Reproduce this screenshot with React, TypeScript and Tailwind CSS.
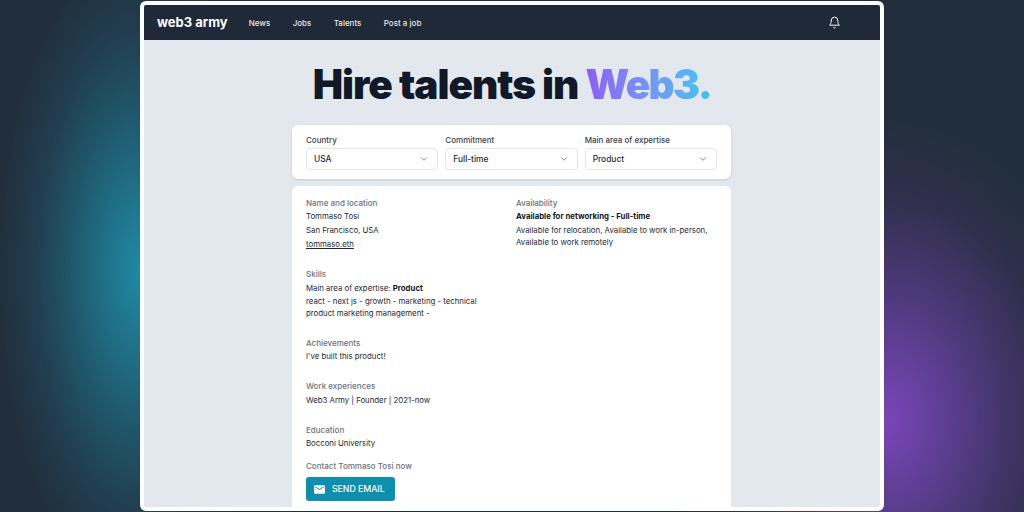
const navLinks = ['News', 'Jobs', 'Talents', 'Post a job'];

const filters = [
  { label: 'Country', value: 'USA' },
  { label: 'Commitment', value: 'Full-time' },
  { label: 'Main area of expertise', value: 'Product' },
];

const Heading = ({ children }: { children: string }) => (
  <p className="text-[8px] leading-[13px] font-medium text-[#6b7280]">{children}</p>
);

const App = () => {
  return (
    <div className="flex h-[512px] w-[1024px] justify-center overflow-hidden bg-[#212f3d] bg-[radial-gradient(ellipse_140px_320px_at_140px_270px,#1f8aa3_0%,#1f7188_25%,#20566a_50%,#213e50_75%,transparent_100%),radial-gradient(ellipse_220px_300px_at_886px_420px,#7a45b8_0%,#5f3f95_25%,#46376f_50%,#302f4c_75%,transparent_100%)] py-px font-['Inter',sans-serif]">
      <div className="flex h-[510px] w-[744px] flex-col overflow-hidden rounded-md border-[4px] border-white bg-[#e2e8ee]">
        <nav className="flex h-[35px] shrink-0 items-center bg-[#1f2937] pr-[39px] pl-[13px]">
          <span className="text-[13px] font-bold text-white">web3 army</span>
          <div className="ml-[21px] flex gap-[22.4px] text-[8px] font-medium text-[#e5e7eb]">
            {navLinks.map((link) => (
              <span key={link}>{link}</span>
            ))}
          </div>
          <svg className="ml-auto text-white" width="13" height="13" viewBox="0 0 24 24" fill="none" stroke="currentColor" strokeWidth="1.8" strokeLinecap="round" strokeLinejoin="round">
            <path d="M6 8a6 6 0 0 1 12 0c0 7 3 9 3 9H3s3-2 3-9" />
            <path d="M10.3 21a1.94 1.94 0 0 0 3.4 0" />
          </svg>
        </nav>

        <h1 className="mt-[22px] text-center text-[40.5px] leading-[46px] font-black tracking-[-0.025em] text-[#111827]">
          Hire talents in{' '}
          <span className="bg-gradient-to-r from-[#8b5cf6] to-[#38c5f0] bg-clip-text tracking-[-0.04em] text-transparent">Web3.</span>
        </h1>

        <section className="mt-[17px] ml-[148px] grid w-[439px] shrink-0 grid-cols-3 gap-[7px] rounded-md bg-white px-[14px] pt-2 pb-[9px] shadow-sm">
          {filters.map((filter) => (
            <div key={filter.label}>
              <label className="block text-[8px] leading-[14px] font-medium text-[#374151]">{filter.label}</label>
              <div className="mt-px flex h-[22px] items-center justify-between rounded-[4px] border border-[#e5e7eb] pr-[8px] pl-[7px] text-[8.4px] font-medium text-[#1f2937]">
                {filter.value}
                <svg width="10" height="10" viewBox="0 0 24 24" fill="none" stroke="#6b7280" strokeWidth="2" strokeLinecap="round" strokeLinejoin="round">
                  <path d="m6 9 6 6 6-6" />
                </svg>
              </div>
            </div>
          ))}
        </section>

        <section className="mt-[7px] ml-[148px] grid w-[439px] flex-1 grid-cols-[210px_1fr] rounded-t-md bg-white px-[14px] pt-[11px] text-[7.8px] leading-[14px] text-[#1f2937]">
          <div>
            <Heading>Name and location</Heading>
            <p className="-mt-px">Tommaso Tosi</p>
            <p>San Francisco, USA</p>
            <p className="underline">tommaso.eth</p>

            <div className="mt-[17px]">
              <Heading>Skills</Heading>
              <p>
                Main area of expertise: <b className="font-bold text-[#111827]">Product</b>
              </p>
              <p className="w-[190px] leading-[12px]">react - next js - growth - marketing - technical product marketing management -</p>
            </div>

            <div className="mt-[18px]">
              <Heading>Achievements</Heading>
              <p className="-mt-px">I've built this product!</p>
            </div>

            <div className="mt-[17px]">
              <Heading>Work experiences</Heading>
              <p>Web3 Army | Founder | 2021-now</p>
            </div>

            <div className="mt-[17px]">
              <Heading>Education</Heading>
              <p className="-mt-px">Bocconi University</p>
            </div>

            <div className="mt-[10px]">
              <Heading>Contact Tommaso Tosi now</Heading>
              <button className="mt-[4px] flex h-6 w-[89px] items-center rounded-[3px] bg-[#0e8fb0] pl-[7px] text-[8.7px] font-medium text-white">
                <svg width="13" height="13" viewBox="0 0 24 24" fill="currentColor">
                  <path d="M20 4H4c-1.1 0-2 .9-2 2v12c0 1.1.9 2 2 2h16c1.1 0 2-.9 2-2V6c0-1.1-.9-2-2-2zm0 4l-8 5-8-5V6l8 5 8-5v2z" />
                </svg>
                <span className="ml-[6px]">SEND EMAIL</span>
              </button>
            </div>
          </div>

          <div>
            <Heading>Availability</Heading>
            <p className="-mt-px font-bold text-[#111827]">Available for networking - Full-time</p>
            <p className="mt-px w-[200px] leading-[12px]">Available for relocation, Available to work in-person, Available to work remotely</p>
          </div>
        </section>
      </div>
    </div>
  );
};

export default App;
